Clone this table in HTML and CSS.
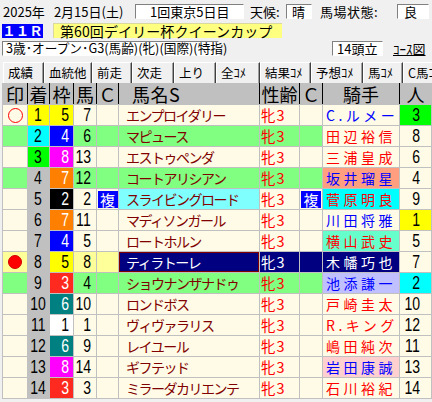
FILE: index.html
```html
<!DOCTYPE html>
<html lang="ja">
<head>
<meta charset="utf-8">
<link rel="stylesheet" href="styles.css">
</head>
<body>
<div class="line l1">
  <span class="date"><span>2025年</span><span class="md">2月15日(土)</span></span>
  <span class="sunk kai">1回東京5日目</span>
  <span class="lbl tenko">天候:</span><span class="sunk tbox">晴</span>
  <span class="lbl baba">馬場状態:</span><span class="sunk bbox">良</span>
</div>
<div class="line l2">
  <span class="race">１１Ｒ</span>
  <span class="title">第60回デイリー杯クイーンカップ</span>
</div>
<div class="line l3">
  <span class="sunk cond">3歳･オープン･G3(馬齢)(牝)(国際)(特指)</span>
  <span class="sunk heads">14頭立</span>
  <span class="course">ｺｰｽ図</span>
</div>
<div class="tabs">
  <span class="tab w41">成績</span>
  <span class="tab w48">血統他</span>
  <span class="tab w40">前走</span>
  <span class="tab w42">次走</span>
  <span class="tab w42">上り</span>
  <span class="tab w44">全ｺﾒ</span>
  <span class="tab w51">結果ｺﾒ</span>
  <span class="tab w52">予想ｺﾒ</span>
  <span class="tab w40">馬ｺﾒ</span>
  <span class="tab w40">C馬ｺﾒ</span>
</div>
<div class="grid">
  <div class="row head">
    <div class="h">印</div><div class="h">着</div><div class="h">枠</div><div class="h">馬</div><div class="h">Ｃ</div>
    <div class="h hname">馬名S</div><div class="h">性齢</div><div class="h">Ｃ</div><div class="h">騎手</div><div class="h">人</div>
  </div>

  <div class="row">
    <div class="c mk"><span class="circle"></span></div><div class="c rk y"><span class="n">1</span></div><div class="c wk wk5"><span class="n">5</span></div><div class="c ub"><span class="n">7</span></div><div class="c"></div>
    <div class="c nm">エンプロイダリー</div><div class="c sx">牝3</div><div class="c"></div><div class="c jk blue">C.ルメー</div><div class="c pop pg"><span class="n">3</span></div>
  </div>
  <div class="row g">
    <div class="c"></div><div class="c rk cy"><span class="n">2</span></div><div class="c wk wk4"><span class="n">4</span></div><div class="c ub"><span class="n">6</span></div><div class="c"></div>
    <div class="c nm">マピュース</div><div class="c sx">牝3</div><div class="c"></div><div class="c jk red cr">田辺裕信</div><div class="c pop cr"><span class="n">8</span></div>
  </div>
  <div class="row">
    <div class="c"></div><div class="c rk gr"><span class="n">3</span></div><div class="c wk wk8"><span class="n">8</span></div><div class="c ub"><span class="n">13</span></div><div class="c"></div>
    <div class="c nm">エストゥペンダ</div><div class="c sx">牝3</div><div class="c"></div><div class="c jk red">三浦皇成</div><div class="c pop"><span class="n">6</span></div>
  </div>
  <div class="row g">
    <div class="c"></div><div class="c rk"><span class="n">4</span></div><div class="c wk wk7"><span class="n">7</span></div><div class="c ub"><span class="n">12</span></div><div class="c"></div>
    <div class="c nm">コートアリシアン</div><div class="c sx">牝3</div><div class="c"></div><div class="c jk blue salmon">坂井瑠星</div><div class="c pop cr"><span class="n">4</span></div>
  </div>
  <div class="row">
    <div class="c"></div><div class="c rk"><span class="n">5</span></div><div class="c wk wk2"><span class="n">2</span></div><div class="c ub"><span class="n">2</span></div><div class="c fk"><span class="fuku">複</span></div>
    <div class="c nm lcy">スライビングロード</div><div class="c sx">牝3</div><div class="c fk"><span class="fuku">複</span></div><div class="c jk red cyb">菅原明良</div><div class="c pop"><span class="n">9</span></div>
  </div>
  <div class="row">
    <div class="c"></div><div class="c rk"><span class="n">6</span></div><div class="c wk wk7"><span class="n">7</span></div><div class="c ub"><span class="n">11</span></div><div class="c"></div>
    <div class="c nm">マディソンガール</div><div class="c sx">牝3</div><div class="c"></div><div class="c jk blue">川田将雅</div><div class="c pop py"><span class="n">1</span></div>
  </div>
  <div class="row">
    <div class="c"></div><div class="c rk"><span class="n">7</span></div><div class="c wk wk4"><span class="n">4</span></div><div class="c ub"><span class="n">5</span></div><div class="c"></div>
    <div class="c nm">ロートホルン</div><div class="c sx">牝3</div><div class="c"></div><div class="c jk red mint">横山武史</div><div class="c pop"><span class="n">5</span></div>
  </div>
  <div class="row">
    <div class="c mk ly"><span class="dot"></span></div><div class="c rk"><span class="n">8</span></div><div class="c wk wk5"><span class="n">5</span></div><div class="c ub ly"><span class="n">8</span></div><div class="c ly"></div>
    <div class="c nm navy sel">ティラトーレ</div><div class="c sx navy">牝3</div><div class="c navy"></div><div class="c jk navy">木幡巧也</div><div class="c pop"><span class="n">7</span></div>
  </div>
  <div class="row g">
    <div class="c"></div><div class="c rk"><span class="n">9</span></div><div class="c wk wk3"><span class="n">3</span></div><div class="c ub"><span class="n">4</span></div><div class="c"></div>
    <div class="c nm">ショウナンザナドゥ</div><div class="c sx">牝3</div><div class="c"></div><div class="c jk blue lav">池添謙一</div><div class="c pop cy"><span class="n">2</span></div>
  </div>
  <div class="row">
    <div class="c"></div><div class="c rk"><span class="n">10</span></div><div class="c wk wk6"><span class="n">6</span></div><div class="c ub"><span class="n">10</span></div><div class="c"></div>
    <div class="c nm">ロンドボス</div><div class="c sx">牝3</div><div class="c"></div><div class="c jk red">戸崎圭太</div><div class="c pop"><span class="n">10</span></div>
  </div>
  <div class="row">
    <div class="c"></div><div class="c rk"><span class="n">11</span></div><div class="c wk wk1"><span class="n">1</span></div><div class="c ub"><span class="n">1</span></div><div class="c"></div>
    <div class="c nm">ヴィヴァラリス</div><div class="c sx">牝3</div><div class="c"></div><div class="c jk red">R.キング</div><div class="c pop"><span class="n">12</span></div>
  </div>
  <div class="row">
    <div class="c"></div><div class="c rk"><span class="n">12</span></div><div class="c wk wk6"><span class="n">6</span></div><div class="c ub"><span class="n">9</span></div><div class="c"></div>
    <div class="c nm">レイユール</div><div class="c sx">牝3</div><div class="c"></div><div class="c jk red">嶋田純次</div><div class="c pop"><span class="n">11</span></div>
  </div>
  <div class="row">
    <div class="c"></div><div class="c rk"><span class="n">13</span></div><div class="c wk wk8"><span class="n">8</span></div><div class="c ub"><span class="n">14</span></div><div class="c"></div>
    <div class="c nm">ギフテッド</div><div class="c sx">牝3</div><div class="c"></div><div class="c jk blue pink">岩田康誠</div><div class="c pop"><span class="n">13</span></div>
  </div>
  <div class="row">
    <div class="c"></div><div class="c rk"><span class="n">14</span></div><div class="c wk wk3"><span class="n">3</span></div><div class="c ub"><span class="n">3</span></div><div class="c"></div>
    <div class="c nm">ミラーダカリエンテ</div><div class="c sx">牝3</div><div class="c"></div><div class="c jk red">石川裕紀</div><div class="c pop"><span class="n">14</span></div>
  </div>
</div>
</body>
</html>
```
FILE: styles.css
```css
* { box-sizing: border-box; margin: 0; padding: 0; }
html, body { width: 432px; height: 402px; overflow: hidden; }
body {
  background: #f0f0f0;
  font-family: "Noto Sans CJK JP", "Noto Sans", sans-serif;
  color: #000;
  line-height: 1;
}

.line { display: flex; align-items: center; white-space: nowrap; }
.l1 { height: 22px; font-size: 13px; }
.l2 { height: 17px; }
.l3 { height: 19px; font-size: 12.7px; }

.sunk {
  background: #fff;
  border-top: 1px solid #808080;
  border-left: 1px solid #808080;
  border-right: 1px solid #fff;
  border-bottom: 1px solid #fff;
  height: 15px;
  display: flex;
  align-items: center;
}

.date { width: 135px; padding-left: 3px; display: flex; }
.md { margin-left: 9px; }
.kai { width: 109px; padding-left: 14px; }
.tenko { margin-left: 6px; width: 36px; }
.tbox { width: 26px; padding-left: 5px; }
.baba { margin-left: 8px; width: 77px; letter-spacing: 0.5px; }
.bbox { width: 32px; padding-left: 6px; }

.race {
  margin-left: 2px;
  width: 41px;
  height: 14px;
  background: #0000ff;
  color: #fff;
  font-weight: bold;
  font-size: 13.5px;
  display: flex;
  align-items: center;
  justify-content: center;
}
.title {
  margin-left: 10px;
  width: 229px;
  height: 15px;
  background: #ffff80;
  border-top: 1px solid #d8d8a0;
  border-left: 1px solid #d8d8a0;
  font-size: 14px;
  padding-left: 6px;
  display: flex;
  align-items: center;
  letter-spacing: 0.1px;
}

.cond { margin-left: 2px; width: 217px; padding-left: 3px; }
.heads { margin-left: 113px; width: 51px; padding-left: 4px; font-size: 13px; }
.course { margin-left: 10px; text-decoration: underline; font-size: 13px; }

.tabs {
  margin-top: 4px;
  margin-left: 3px;
  height: 21px;
  display: flex;
  white-space: nowrap;
  overflow: hidden;
}
.tab {
  flex: none;
  height: 21px;
  border-left: 1px solid #fff;
  border-top: 1px solid #fff;
  border-right: 1px solid #404040;
  box-shadow: inset -1px 0 0 #a0a0a0;
  padding-left: 4px;
  font-size: 12.5px;
  display: flex;
  align-items: center;
}
.w40 { width: 40px; } .w41 { width: 41px; } .w42 { width: 42px; }
.w44 { width: 44px; } .w48 { width: 48px; } .w51 { width: 51px; } .w52 { width: 52px; }

.grid {
  margin-left: 2px;
  width: 430px;
  background: #c0c0c0;
  padding: 0 1px 1px;
  display: flex;
  flex-direction: column;
  gap: 1px;
}
.row {
  display: grid;
  grid-template-columns: 24px 21px 23px 22px 21px 140px 39px 22px 76px 31px;
  column-gap: 1px;
  height: 20px;
}
.row.head { height: 21px; }
.h {
  background: #c0c0c0;
  font-size: 18px;
  display: flex;
  align-items: center;
  justify-content: center;
  box-shadow: -1px 0 0 #000;
}
.h:first-child { box-shadow: none; }
.h.hname { justify-content: flex-start; padding-left: 13px; letter-spacing: 0.5px; }

.c {
  background: #fffbe6;
  display: flex;
  align-items: center;
  overflow: hidden;
  white-space: nowrap;
}
.row.g .c { background: #80ff80; }

.rk, .wk, .ub, .pop {
  font-family: "Liberation Sans", "Noto Sans", sans-serif;
  font-size: 18px;
}
.n {
  display: inline-block;
  transform: scaleX(0.78);
  transform-origin: right center;
}
.rk .n { transform-origin: center center; }

.row .c.rk { background: #c0c0c0; justify-content: center; }
.row .c.rk.y { background: #ffff00; }
.row .c.rk.cy { background: #00ffff; }
.row .c.rk.gr { background: #00ff00; }

.wk { justify-content: flex-end; padding-right: 4px; color: #fff; }
.row .c.wk1 { background: #ffffff; color: #000; }
.row .c.wk2 { background: #000000; }
.row .c.wk3 { background: #ff2a1f; }
.row .c.wk4 { background: #0000ff; }
.row .c.wk5 { background: #ffff00; color: #000; }
.row .c.wk6 { background: #008080; }
.row .c.wk7 { background: #ff8000; }
.row .c.wk8 { background: #ff00ff; }

.ub { justify-content: flex-end; padding-right: 5px; }

.mk { justify-content: center; }
.circle {
  width: 15px; height: 15px;
  border: 1px solid #ff0000;
  border-radius: 50%;
}
.dot {
  width: 14px; height: 14px;
  background: #ff0000;
  border: 1px solid #d00000;
  border-radius: 50%;
}
.row .c.ly { background: #ffff99; }

.fk { justify-content: center; }
.fuku {
  width: 20px;
  height: 17px;
  margin-top: 1px;
  background: #0000ff;
  color: #fff;
  font-size: 15px;
  display: flex;
  align-items: center;
  justify-content: center;
}

.nm {
  color: #800000;
  font-size: 14px;
  letter-spacing: -1.5px;
  padding-left: 7px;
}
.row .c.lcy { background: #80ffff; }

.sx {
  color: #ff0000;
  font-size: 14.5px;
  letter-spacing: 1px;
  padding-left: 1px;
}

.jk {
  font-size: 14px;
  letter-spacing: 3.5px;
  padding-left: 3px;
}
.red { color: #ff0000; }
.blue { color: #0000ff; }
.row .c.salmon { background: #ff9f7f; }
.row .c.cyb { background: #00ffff; }
.row .c.mint { background: #66ffcc; }
.row .c.lav { background: #c0c0ff; }
.row .c.pink { background: #ffd0d0; }
.row.g .c.cr, .row .c.cr { background: #fffbe6; }
.row .c.navy { background: #000080; color: #fff; }
.row .c.sel { box-shadow: inset 0 0 0 1px #800000; }

.pop { justify-content: flex-end; padding-right: 11px; }
.row .c.pg { background: #00ff00; }
.row .c.py { background: #ffff00; }
.row .c.cy { background: #00ffff; }
```
